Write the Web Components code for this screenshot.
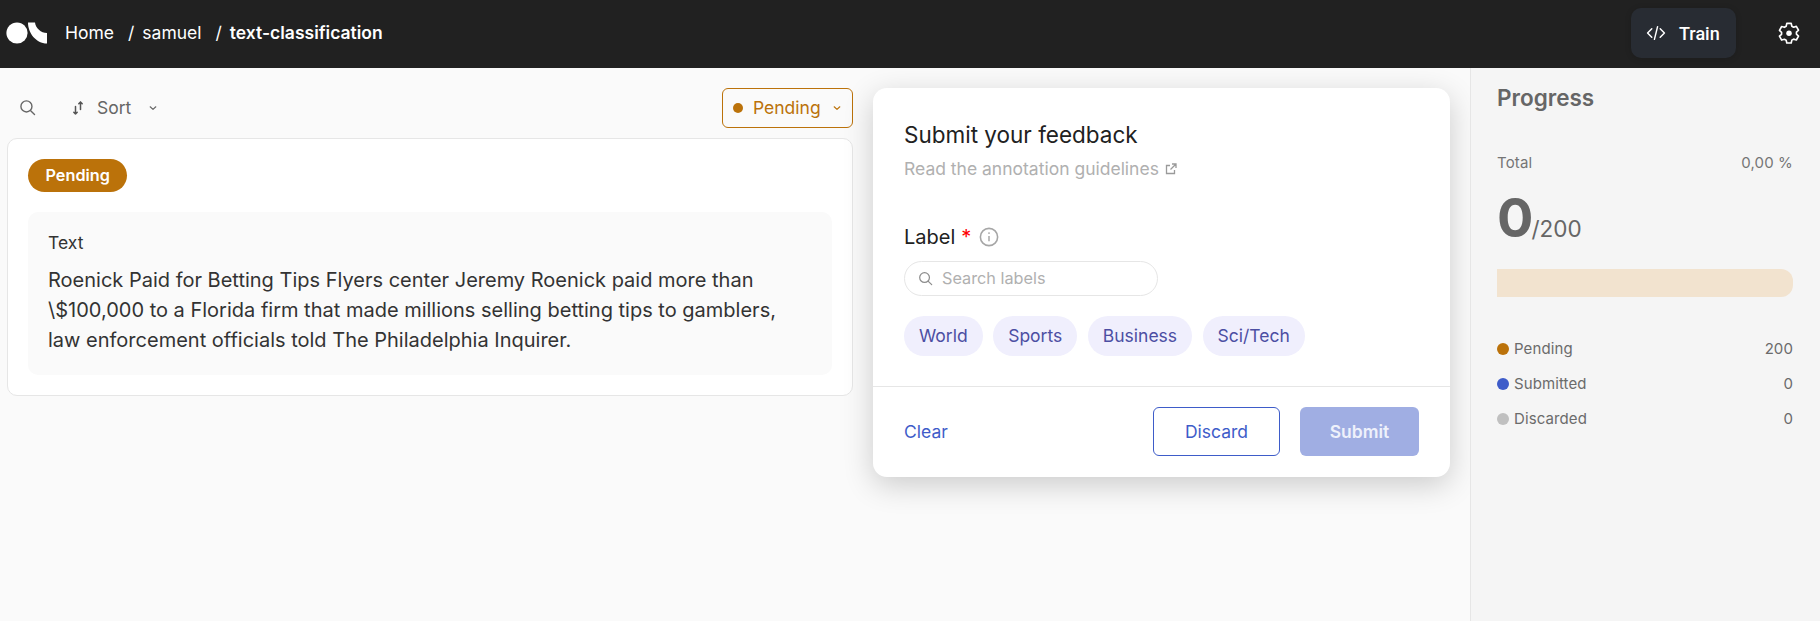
<!DOCTYPE html>
<html>
<head>
<meta charset="utf-8">
<title>text-classification</title>
<style>
html, body { margin: 0; height: 100%; }
body { font-family: Inter, "Liberation Sans", sans-serif; background: #fafafa; overflow: hidden; }
</style>
</head>
<body>
<app-shell></app-shell>
<script>
const searchIcon = (size, color) => `<svg width="${size}" height="${size}" viewBox="0 0 16 16" fill="none" stroke="${color}" stroke-width="1.3" stroke-linecap="round"><circle cx="7" cy="7" r="5.2"/><path d="M11 11l3.6 3.6"/></svg>`;
const chevron = (color) => `<svg width="10" height="10" viewBox="0 0 10 10" fill="none" stroke="${color}" stroke-width="1.2" stroke-linecap="round" stroke-linejoin="round"><path d="M2.2 3.8L5 6.4l2.8-2.6"/></svg>`;

class AppHeader extends HTMLElement {
    constructor() {
        super();
        this.shadowDOM = this.attachShadow({mode: "open"});
    }
    connectedCallback() {
        this.shadowDOM.innerHTML = `
        <style>
        :host { display: flex; align-items: center; height: 68px; background: #212121; color: #fff; font-size: 17.5px; padding: 0 20px 2px 6px; box-sizing: border-box; }
        .logo { display: block; margin-right: 17px; }
        .crumb { display: flex; align-items: center; padding-bottom: 2px; }
        .sep { margin: 0 8px 0 14px; }
        .sep2 { margin: 0 8px 0 14px; }
        b { font-weight: 600; }
        .train { margin-left: auto; display: flex; align-items: center; gap: 13px; width: 105px; height: 50px; box-sizing: border-box; padding-left: 15px; background: #282c33; border-radius: 10px; font-size: 18px; font-weight: 500; box-shadow: 0 1px 6px rgba(0,0,0,.15); font-family: Roboto, sans-serif; }
        .gear { display: block; margin-left: 42px; }
        </style>
        <svg class="logo" width="42" height="22" viewBox="0 0 42 22"><circle cx="11" cy="11" r="10.6" fill="#fff"/><path d="M22 0.5H29C29.5 6 35 11 41 11V21.5C30 21.5 22 11 22 0.5Z" fill="#fff"/></svg>
        <div class="crumb"><span>Home</span><span class="sep">/</span><span>samuel</span><span class="sep2">/</span><b>text-classification</b></div>
        <div class="train"><svg width="20" height="20" viewBox="0 0 19 19" fill="none" stroke="#fff" stroke-width="1.4" stroke-linecap="round" stroke-linejoin="round"><path d="M5.5 5.5L1.5 9.5l4 4M13.5 5.5l4 4-4 4M11 3.5L8 15.5"/></svg><span>Train</span></div>
        <svg class="gear" width="22" height="24" viewBox="0 0 24 24" fill="none" stroke="#fff" stroke-width="1.8" stroke-linejoin="round"><path d="M9.6 1.5h4.8l.7 3.1 1.9 1.1 3-.9 2.4 4.2-2.3 2.1v2.2l2.3 2.1-2.4 4.2-3-.9-1.9 1.1-.7 3.1H9.6l-.7-3.1L7 18.8l-3 .9-2.4-4.2 2.3-2.1v-2.2L1.6 9.1 4 4.9l3 .9 1.9-1.1z"/><circle cx="12" cy="12.3" r="3" fill="#fff" stroke="none"/></svg>`;
    }
}
customElements.define("app-header", AppHeader);

class RecordCard extends HTMLElement {
    constructor() {
        super();
        this.attachShadow({mode: "open"}).innerHTML = `
        <style>
        :host { display: block; background: #fff; border: 1px solid #e6e6e6; border-radius: 10px; padding: 20px; height: 258px; box-sizing: border-box; color: #212121; }
        .badge { display: inline-flex; align-items: center; height: 33px; box-sizing: border-box; padding: 0 17.5px 2px; background: #bb720a; color: #fff; border-radius: 17px; font-size: 16.25px; font-weight: 600; }
        .field { margin-top: 20px; background: #fafafa; border-radius: 10px; padding: 21px 20px 0; height: 163px; box-sizing: border-box; }
        .title { font-size: 17.5px; line-height: 20px; margin-bottom: 12px; color: #333; }
        .text { font-size: 20px; line-height: 30px; color: #333; }
        </style>
        <span class="badge">Pending</span>
        <div class="field"><div class="title">Text</div><div class="text"><slot></slot></div></div>`;
    }
}
customElements.define("record-card", RecordCard);

class RecordsColumn extends HTMLElement {
    constructor() {
        super();
        this.attachShadow({mode: "open"}).innerHTML = `
        <style>
        :host { display: block; width: 846px; flex: none; }
        .bar { display: flex; align-items: center; height: 40px; margin-bottom: 10px; color: #666; font-size: 17.5px; }
        .search { display: block; margin: 2px 0 0 12px; }
        .sort { display: flex; align-items: center; margin-left: 36px; padding-bottom: 1px; }
        .sort span { margin: 0 17px 0 13px; padding-bottom: 1px; }
        .filter { margin-left: auto; display: flex; align-items: center; width: 131px; height: 40px; box-sizing: border-box; padding: 0 0 1px 10px; border: 1px solid #bb720a; border-radius: 6px; color: #bb720a; background: transparent; }
        .dot { width: 10px; height: 10px; border-radius: 50%; background: #bb720a; margin-right: 10px; }
        .filter svg { margin-left: 11px; }
        </style>
        <div class="bar">
            <span class="search">${searchIcon(17, "#666")}</span>
            <div class="sort"><svg width="12" height="16" viewBox="0 0 12 16" fill="none" stroke="#555" stroke-width="1.5" stroke-linecap="round" stroke-linejoin="round"><path d="M3.5 6.5V14M1.8 12.2L3.5 14l1.7-1.8M8.5 9.5V2M6.8 3.8L8.5 2l1.7 1.8"/></svg><span>Sort</span>${chevron("#666")}</div>
            <div class="filter"><i class="dot"></i>Pending${chevron("#bb720a")}</div>
        </div>
        <record-card><slot></slot></record-card>`;
    }
}
customElements.define("records-column", RecordsColumn);

class LabelChip extends HTMLElement {
    constructor() {
        super();
        this.attachShadow({mode: "open"}).innerHTML = `
        <style>
        :host { display: inline-flex; align-items: center; height: 40px; box-sizing: border-box; padding: 0 15px 2px; background: #f0effd; color: #4c4ea3; border-radius: 20px; font-size: 17.5px; }
        </style>
        <slot></slot>`;
    }
}
customElements.define("label-chip", LabelChip);

class FeedbackPanel extends HTMLElement {
    constructor() {
        super();
        this.attachShadow({mode: "open"}).innerHTML = `
        <style>
        :host { display: block; width: 577px; height: 389px; flex: none; box-sizing: border-box; background: #fff; border-radius: 14px; box-shadow: 0 8px 30px rgba(0,0,0,.19); color: #212121; }
        .body { padding: 32px 31px 0; height: 299px; box-sizing: border-box; border-bottom: 1px solid #e6e6e6; }
        h2 { margin: 0; font-size: 22.5px; font-weight: 400; line-height: 30px; }
        .guide { margin-top: 7px; display: flex; align-items: center; gap: 6px; font-size: 17.5px; line-height: 24px; color: #b0b0b0; }
        .label { margin-top: 43px; display: flex; align-items: center; font-size: 20px; line-height: 26px; }
        .req { color: #f00; margin-left: 6px; }
        .info { margin-left: 8px; display: block; }
        .search { margin-top: 11px; display: flex; align-items: center; gap: 9px; width: 254px; height: 35px; box-sizing: border-box; padding: 0 0 1px 13px; border: 1px solid #e6e6e6; border-radius: 18px; font-size: 16.25px; color: #b0b0b0; }
        .chips { margin-top: 20px; display: flex; gap: 10.5px; }
        .foot { display: flex; align-items: center; padding: 20px 31px 0; }
        .clear { color: #3e5cc9; font-size: 17.5px; }
        .discard, .submit { display: flex; align-items: center; justify-content: center; width: 127px; height: 49px; box-sizing: border-box; border-radius: 6px; font-size: 17.5px; }
        .discard { margin-left: auto; border: 1px solid #3e5cc9; color: #3e5cc9; }
        .submit { margin-left: 20px; width: 119px; background: #a0aee3; color: #eef1fb; font-weight: 600; }
        </style>
        <div class="body">
            <h2>Submit your feedback</h2>
            <div class="guide">Read the annotation guidelines <svg width="12" height="12" viewBox="0 0 12 12" fill="none" stroke="#9a9a9a" stroke-width="1.3"><path d="M9.5 7v3.5h-8v-8H5M7 1h4v4M11 1L5.5 6.5"/></svg></div>
            <div class="label">Label<span class="req">*</span><svg class="info" width="20" height="20" viewBox="0 0 19 19" fill="none" stroke="#a6a6a6" stroke-width="1.5"><circle cx="9.5" cy="9.5" r="8.2"/><path d="M9.5 8.5v5" stroke-width="1.4"/><circle cx="9.5" cy="5.8" r=".9" fill="#a6a6a6" stroke="none"/></svg></div>
            <div class="search">${searchIcon(15, "#8c8c8c")}<span>Search labels</span></div>
            <div class="chips"><label-chip>World</label-chip><label-chip>Sports</label-chip><label-chip>Business</label-chip><label-chip>Sci/Tech</label-chip></div>
        </div>
        <div class="foot"><span class="clear">Clear</span><div class="discard">Discard</div><div class="submit">Submit</div></div>`;
    }
}
customElements.define("feedback-panel", FeedbackPanel);

class StatusRow extends HTMLElement {
    connectedCallback() {
        this.attachShadow({mode: "open"}).innerHTML = `
        <style>
        :host { display: flex; align-items: center; height: 35px; font-size: 15px; letter-spacing: .1px; color: #6b6b6b; }
        i { width: 12px; height: 12px; border-radius: 50%; margin-right: 5px; background: ${this.getAttribute("color")}; }
        span { margin-left: auto; }
        </style>
        <i></i><slot></slot><span>${this.getAttribute("count")}</span>`;
    }
}
customElements.define("status-row", StatusRow);

class ProgressSidebar extends HTMLElement {
    constructor() {
        super();
        this.attachShadow({mode: "open"}).innerHTML = `
        <style>
        :host { display: block; flex: 1; background: #f5f5f5; border-left: 1px solid #e6e6e6; padding: 15px 27px 0 26px; color: #666; box-sizing: border-box; }
        h3 { margin: 0; font-size: 22.5px; font-weight: 600; line-height: 30px; color: #666; }
        .total { margin-top: 39px; display: flex; justify-content: space-between; font-size: 15px; line-height: 22px; letter-spacing: .15px; color: #757575; }
        .count { margin-top: 11px; display: flex; align-items: baseline; height: 66px; line-height: 66px; }
        .count b { font-size: 54px; font-weight: 700; }
        .count span { font-size: 22.5px; margin-left: -2px; }
        .bar { margin-top: 18px; height: 28px; background: #f2e3cf; border-radius: 0 12px 12px 0; }
        .rows { margin-top: 34px; }
        </style>
        <h3>Progress</h3>
        <div class="total"><span>Total</span><span>0,00 %</span></div>
        <div class="count"><b>0</b><span>/200</span></div>
        <div class="bar"></div>
        <div class="rows">
            <status-row color="#bb720a" count="200">Pending</status-row>
            <status-row color="#3e5cc9" count="0">Submitted</status-row>
            <status-row color="#c0c0c0" count="0">Discarded</status-row>
        </div>`;
    }
}
customElements.define("progress-sidebar", ProgressSidebar);

class AppShell extends HTMLElement {
    constructor() {
        super();
        this.attachShadow({mode: "open"}).innerHTML = `
        <style>
        :host { display: flex; flex-direction: column; height: 621px; }
        main { flex: 1; display: flex; align-items: stretch; min-height: 0; }
        .work { display: flex; align-items: flex-start; gap: 20px; padding: 20px 20px 0 7px; }
        </style>
        <app-header></app-header>
        <main>
            <div class="work">
                <records-column>Roenick Paid for Betting Tips Flyers center Jeremy Roenick paid more than \\$100,000 to a Florida firm that made millions selling betting tips to gamblers, law enforcement officials told The Philadelphia Inquirer.</records-column>
                <feedback-panel></feedback-panel>
            </div>
            <progress-sidebar></progress-sidebar>
        </main>`;
    }
}
customElements.define("app-shell", AppShell);
</script>
</body>
</html>
